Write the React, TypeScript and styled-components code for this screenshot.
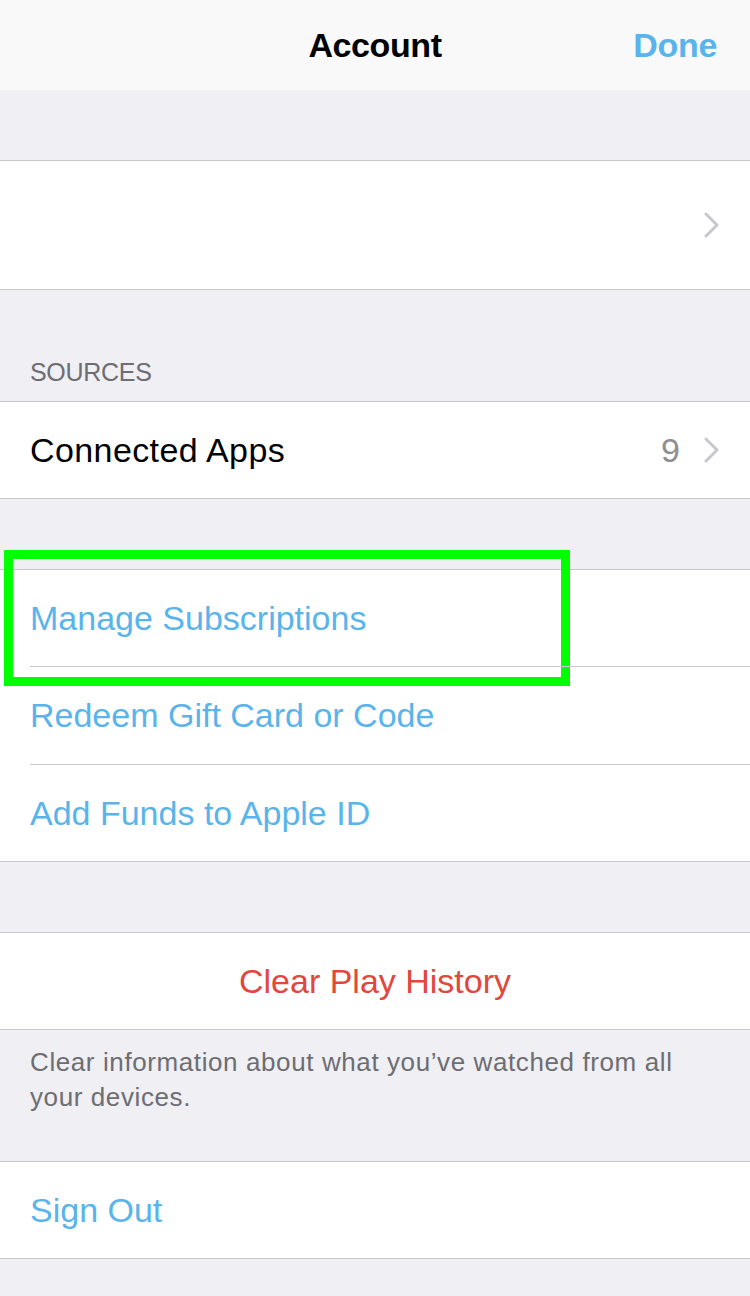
import React from "react";
import styled, { createGlobalStyle } from "styled-components";

const Global = createGlobalStyle`
  html, body { margin: 0; padding: 0; background: #efeff4; }
  body { font-family: "Liberation Sans", "Noto Sans", sans-serif; -webkit-font-smoothing: antialiased; }
`;

const Screen = styled.div`
  width: 750px;
  min-height: 1296px;
  background: #efeff4;
  display: flex;
  flex-direction: column;
`;

const NavBar = styled.header`
  height: 90px;
  background: #f9f9f9;
  display: grid;
  grid-template-columns: 1fr auto 1fr;
  align-items: center;
  padding: 0 33px;
`;

const NavTitle = styled.h1`
  grid-column: 2;
  margin: 0;
  font-size: 34px;
  font-weight: 600;
  color: #000;
  letter-spacing: -0.4px;
`;

const NavAction = styled.button`
  grid-column: 3;
  justify-self: end;
  border: 0;
  background: none;
  padding: 0;
  font: inherit;
  font-size: 34px;
  font-weight: 600;
  color: #5ab4ec;
  letter-spacing: -0.3px;
`;

const Spacer = styled.div<{ $h: number }>`
  height: ${(p) => p.$h}px;
`;

const SectionHeader = styled.div`
  height: 111px;
  display: flex;
  align-items: flex-end;
  padding: 0 0 14px 30px;
  box-sizing: border-box;
  font-size: 25px;
  color: #6d6d72;
  letter-spacing: -0.3px;
`;

const Group = styled.section`
  background: #fff;
  border-top: 1px solid #c8c7cc;
  border-bottom: 1px solid #c8c7cc;
`;

const Row = styled.div<{ $h?: number; $center?: boolean; $divider?: boolean }>`
  height: ${(p) => p.$h ?? 96}px;
  display: flex;
  align-items: center;
  justify-content: ${(p) => (p.$center ? "center" : "flex-start")};
  padding: 0 30px 0 30px;
  box-sizing: border-box;
  position: relative;
  ${(p) =>
    p.$divider
      ? `&::after { content: ""; position: absolute; left: 30px; right: 0; bottom: -1px; height: 1px; background: #c8c7cc; z-index: 1; }`
      : ""}
  & + & { margin-top: 1px; }
`;

const Label = styled.span<{ $tone?: "black" | "blue" | "red" }>`
  font-size: 34px;
  color: ${(p) => (p.$tone === "blue" ? "#5ab4ec" : p.$tone === "red" ? "#e2473c" : "#000")};
  flex: ${(p) => (p.$tone === "red" ? "0 0 auto" : "1 1 auto")};
  letter-spacing: ${(p) => (p.$tone ? "0" : "0.4px")};
`;

const Detail = styled.span`
  font-size: 34px;
  color: #8e8e93;
  margin-right: 24px;
`;

const Footer = styled.p`
  margin: 0;
  padding: 15px 50px 0 30px;
  height: 131px;
  box-sizing: border-box;
  font-size: 26px;
  line-height: 35px;
  color: #6d6d72;
  letter-spacing: 0.6px;
`;

const Highlight = styled.div`
  position: absolute;
  left: 4px;
  top: 550px;
  width: 566px;
  height: 136px;
  border: 9px solid #00ff00;
  box-sizing: border-box;
  pointer-events: none;
`;

const Frame = styled.div`
  position: relative;
`;

const Chevron = () => (
  <svg width="16" height="26" viewBox="0 0 16 26" style={{ flex: "0 0 auto" }}>
    <path d="M2 2 L13 13 L2 24" fill="none" stroke="#c7c7cc" strokeWidth="3" strokeLinecap="round" strokeLinejoin="round" />
  </svg>
);

export default function App() {
  return (
    <Frame>
      <Global />
      <Screen>
        <NavBar>
          <NavTitle>Account</NavTitle>
          <NavAction>Done</NavAction>
        </NavBar>
        <Spacer $h={70} />
        <Group>
          <Row $h={128}>
            <Label />
            <Chevron />
          </Row>
        </Group>
        <SectionHeader>SOURCES</SectionHeader>
        <Group>
          <Row>
            <Label>Connected Apps</Label>
            <Detail>9</Detail>
            <Chevron />
          </Row>
        </Group>
        <Spacer $h={70} />
        <Group>
          <Row $divider>
            <Label $tone="blue">Manage Subscriptions</Label>
          </Row>
          <Row $h={97} $divider>
            <Label $tone="blue">Redeem Gift Card or Code</Label>
          </Row>
          <Row>
            <Label $tone="blue">Add Funds to Apple ID</Label>
          </Row>
        </Group>
        <Spacer $h={70} />
        <Group>
          <Row $center>
            <Label $tone="red">Clear Play History</Label>
          </Row>
        </Group>
        <Footer>Clear information about what you’ve watched from all your devices.</Footer>
        <Group>
          <Row>
            <Label $tone="blue">Sign Out</Label>
          </Row>
        </Group>
      </Screen>
      <Highlight />
    </Frame>
  );
}
